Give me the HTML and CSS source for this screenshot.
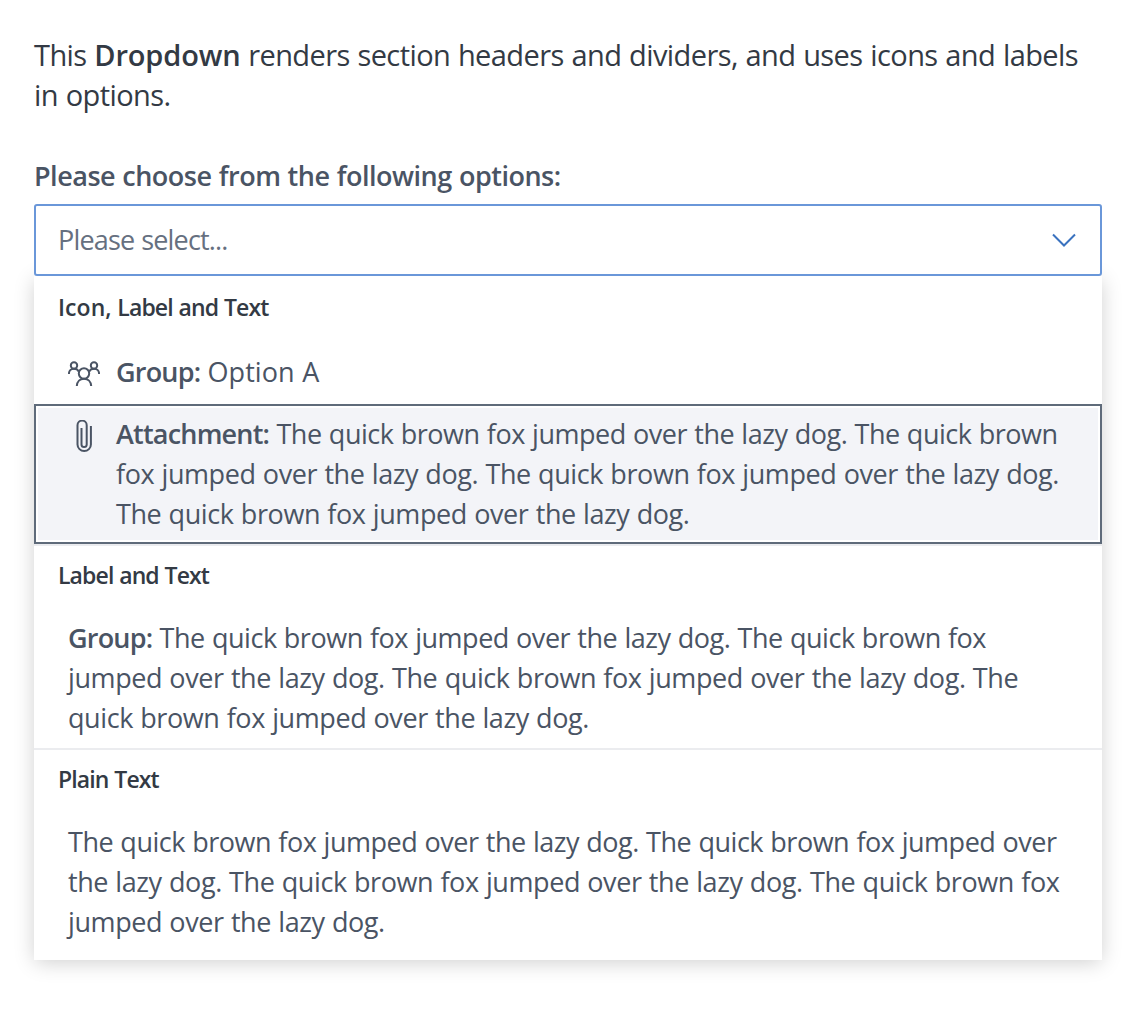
FILE: index.html
```html
<!DOCTYPE html>
<html lang="en">
<head>
<meta charset="utf-8">
<title>Dropdown</title>
<link rel="stylesheet" href="styles.css">
</head>
<body>
<main class="page">
  <p class="intro">This <strong>Dropdown</strong> renders section headers and dividers, and uses icons and labels<br>in options.</p>
  <div class="field-label">Please choose from the following options:</div>
  <div class="select">
    <span class="placeholder">Please select...</span>
    <svg class="chevron" width="24" height="24" viewBox="0 0 24 24"><path d="M1 6.500 12 17.500 23 6.500"/></svg>
  </div>
  <div class="menu">
    <section class="section">
      <h2 class="section-title"><span class="wide">Icon,</span> Label and Text</h2>
      <div class="option single">
        <svg class="icon" width="32" height="32" viewBox="0 0 32 32"><circle cx="16" cy="17.500" r="5.200"/><circle cx="6" cy="9.500" r="3.200"/><circle cx="26" cy="9.500" r="3.200"/><path d="M8.800 30c.3-4.500 3.200-7.300 7.200-7.300s6.900 2.800 7.200 7.300M.9 18c0-3 2-5.200 5-5.200 2.200 0 4 .9 4.900 2.900M31.100 18c0-3-2-5.200-5-5.200-2.200 0-4 .9-4.900 2.900"/></svg>
        <div class="text"><b>Group:</b> <span class="wide">Option A</span></div>
      </div>
      <div class="option active">
        <svg class="icon clip" width="32" height="32" viewBox="0 0 32 32"><path d="M13.500 8v16.500a2.600 2.600 0 0 0 5.200 0V5.200a4.600 4.600 0 0 0-9.200 0V24.500a6.700 6.500 0 0 0 13.400 0V6"/></svg>
        <div class="text"><b>Attachment:</b> <span class="tight">The quick brown fox jumped over the lazy dog. The quick brown</span><br>fox jumped over the lazy dog. The quick brown fox jumped over the lazy dog.<br>The quick brown fox jumped over the lazy dog.</div>
      </div>
    </section>
    <section class="section divided">
      <h2 class="section-title">Label and Text</h2>
      <div class="option">
        <div class="text"><b>Group:</b> <span class="tight">The quick brown fox jumped over the lazy dog. The quick brown fox</span><br>jumped over the lazy dog. The quick brown fox jumped over the lazy dog. The<br>quick brown fox jumped over the lazy dog.</div>
      </div>
    </section>
    <section class="section divided">
      <h2 class="section-title">Plain Text</h2>
      <div class="option">
        <div class="text"><span class="tight">The quick brown fox jumped over the lazy dog. The quick brown fox jumped over</span><br>the lazy dog. The quick brown fox jumped over the lazy dog. The quick brown fox<br>jumped over the lazy dog.</div>
      </div>
    </section>
  </div>
</main>
</body>
</html>
```
FILE: styles.css
```css
* { box-sizing: border-box; }
body { margin: 0; background: #fff; color: #4a5464; font: 27px/40px "Open Sans", sans-serif; letter-spacing: -.41px; word-spacing: .65px; }
.page { min-height: 1010px; padding: 35px 34px 0; white-space: nowrap; }
.intro { margin: 0 0 41px; font-size: 29px; letter-spacing: -.59px; word-spacing: .8px; color: #333a44; }
.intro strong { font-weight: 600; letter-spacing: -.15px; }
.field-label { height: 48px; font-weight: 600; letter-spacing: -.49px; }
.select { height: 72px; border: 2px solid #6a97d9; border-radius: 3px; padding: 0 24px 0 22px; display: flex; align-items: center; justify-content: space-between; position: relative; z-index: 1; background: #fff; }
.placeholder { color: #667080; letter-spacing: -.82px; }
.chevron { fill: none; stroke: #3a72bf; stroke-width: 2; }
.menu { background: #fff; padding-bottom: 8px; box-shadow: 0 3px 20px -1px rgba(0, 0, 0, .2); }
.section-title { margin: 0; padding-left: 24px; height: 64px; font-size: 23px; line-height: 62px; font-weight: 600; letter-spacing: -.88px; color: #333a44; }
.divided .section-title { box-shadow: inset 0 2px #ebecef; }
.option { display: flex; gap: 16px; padding: 10px 34px; }
.option.single { padding: 12px 34px; }
.option.active { background: #f3f4f8; box-shadow: inset 0 0 0 2px #5f6b7a, inset 0 0 0 4px #fff; }
.text b { font-weight: 600; letter-spacing: -.8px; }
.wide { letter-spacing: .05px; }
.tight { letter-spacing: -.47px; }
.icon { flex: none; margin-top: 4px; fill: none; stroke: #4a5464; stroke-width: 2; }
.icon.clip { margin-top: 6px; }
```
